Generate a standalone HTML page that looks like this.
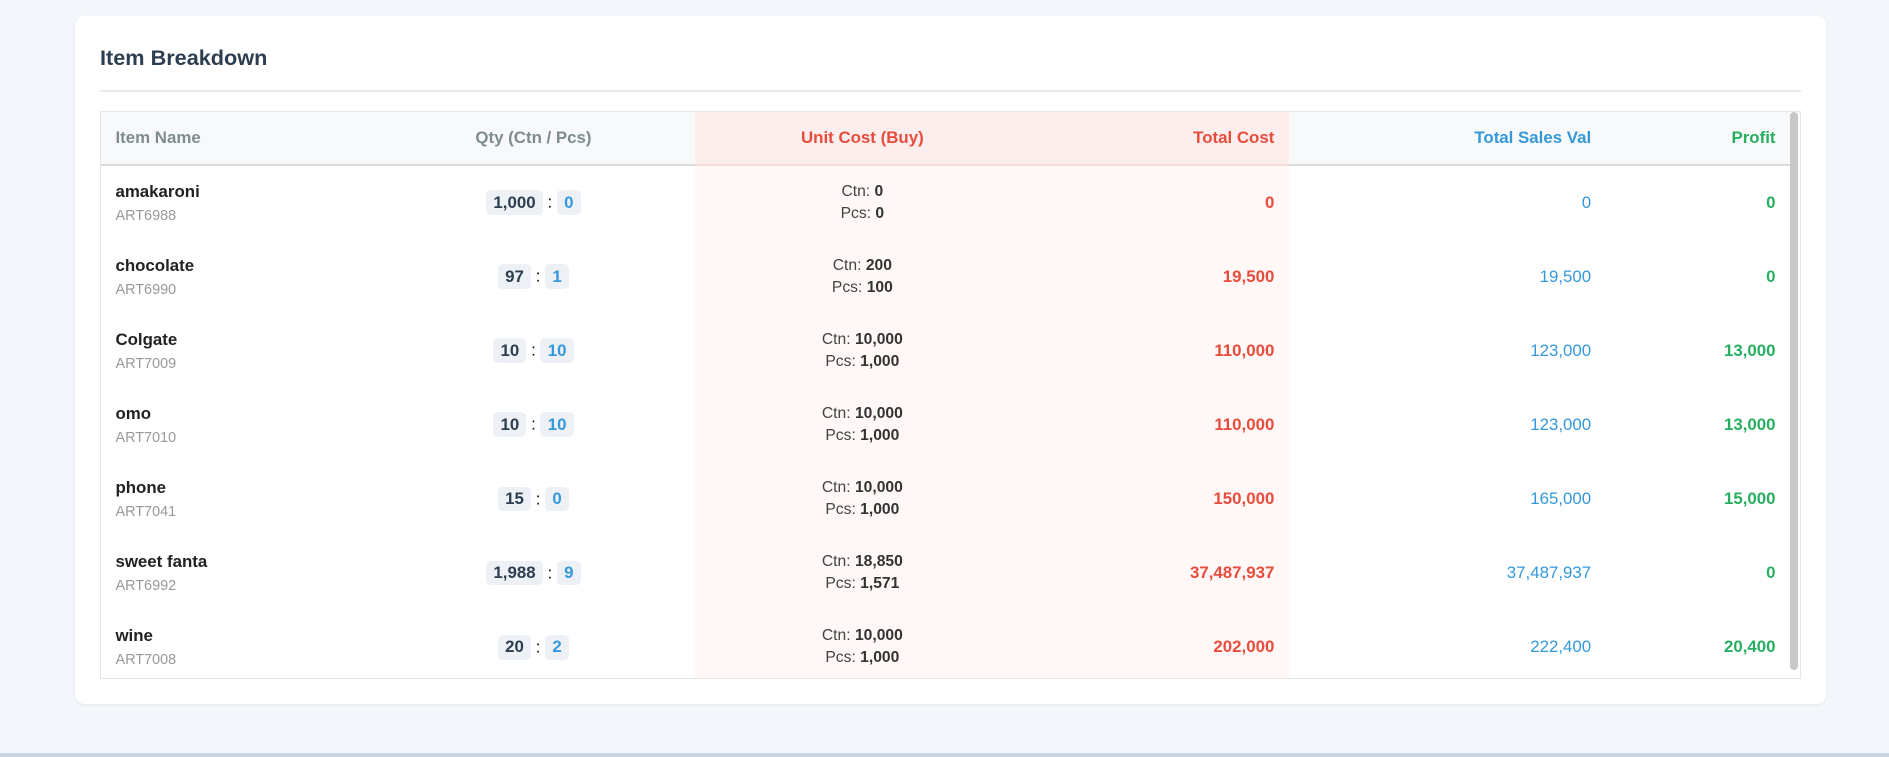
<!DOCTYPE html>
<html><head><meta charset="utf-8"><style>
html,body{margin:0;padding:0;}
body{width:1568px;height:628px;zoom:1.2047;background:#f3f6fa;font-family:"Liberation Sans",sans-serif;position:relative;overflow:hidden;}
.card{position:absolute;left:62px;top:13px;width:1454px;height:571px;background:#fff;border-radius:8px;box-shadow:0 1px 3px rgba(0,0,0,0.05);}
h2{position:absolute;left:21px;top:24px;margin:0;font-size:18px;font-weight:bold;color:#2c3e50;}
.hr{position:absolute;left:21px;top:62px;width:1412px;height:1px;background:#e8ebee;}
.tbl{position:absolute;left:21px;top:79px;width:1410px;height:470px;border:1px solid #e6e6e6;overflow:hidden;}
table{border-collapse:collapse;width:1402px;table-layout:fixed;font-size:14px;}
th{height:43px;background:#f8f9fa;border-bottom:2px solid #dcdcdc;font-weight:bold;color:#7f8c8d;padding:0 12px;}
td{height:61.5px;padding:0 12px;}
.pk{background:#fff8f7;}
th.pk{background:#fdeeee;border-bottom-color:#f7dcdc;}
.nm{font-weight:bold;color:#222;}
.cd{font-size:12px;color:#999;margin-top:5px;}
.b{display:inline-block;background:#edf1f5;border-radius:4px;padding:2px 6px;font-weight:bold;color:#2c3e50;}
.b2{color:#3498db;}
.uc{font-size:13px;color:#444;line-height:18px;text-align:center;}
.uc b{color:#333;}
.red{color:#e74c3c;font-weight:bold;text-align:right;}
.blu{color:#3498db;text-align:right;}
.grn{color:#27ae60;font-weight:bold;text-align:right;}
.sb{position:absolute;right:1px;top:0;width:7px;height:463px;background:#c8c8c8;border-radius:4px;}
.foot{position:absolute;left:0;top:625px;width:1568px;height:3px;background:#c9d2e0;}
</style></head><body>
<div class="card">
<h2>Item Breakdown</h2>
<div class="hr"></div>
<div class="tbl">
<table>
<colgroup><col style="width:225px"><col style="width:268px"><col style="width:278px"><col style="width:215px"><col style="width:263px"><col style="width:153px"></colgroup>
<tr><th style="text-align:left">Item Name</th><th>Qty (Ctn / Pcs)</th><th class="pk" style="color:#e74c3c">Unit Cost (Buy)</th><th class="pk" style="color:#e74c3c;text-align:right">Total Cost</th><th style="color:#3498db;text-align:right">Total Sales Val</th><th style="color:#27ae60;text-align:right">Profit</th></tr>
<tr><td><div class="nm">amakaroni</div><div class="cd">ART6988</div></td><td style="text-align:center"><span class="b">1,000 </span> : <span class="b b2">0</span></td><td class="pk uc">Ctn: <b>0</b><br>Pcs: <b>0</b></td><td class="pk red">0</td><td class="blu">0</td><td class="grn">0</td></tr>
<tr><td><div class="nm">chocolate</div><div class="cd">ART6990</div></td><td style="text-align:center"><span class="b">97 </span> : <span class="b b2">1</span></td><td class="pk uc">Ctn: <b>200</b><br>Pcs: <b>100</b></td><td class="pk red">19,500</td><td class="blu">19,500</td><td class="grn">0</td></tr>
<tr><td><div class="nm">Colgate</div><div class="cd">ART7009</div></td><td style="text-align:center"><span class="b">10 </span> : <span class="b b2">10</span></td><td class="pk uc">Ctn: <b>10,000</b><br>Pcs: <b>1,000</b></td><td class="pk red">110,000</td><td class="blu">123,000</td><td class="grn">13,000</td></tr>
<tr><td><div class="nm">omo</div><div class="cd">ART7010</div></td><td style="text-align:center"><span class="b">10 </span> : <span class="b b2">10</span></td><td class="pk uc">Ctn: <b>10,000</b><br>Pcs: <b>1,000</b></td><td class="pk red">110,000</td><td class="blu">123,000</td><td class="grn">13,000</td></tr>
<tr><td><div class="nm">phone</div><div class="cd">ART7041</div></td><td style="text-align:center"><span class="b">15 </span> : <span class="b b2">0</span></td><td class="pk uc">Ctn: <b>10,000</b><br>Pcs: <b>1,000</b></td><td class="pk red">150,000</td><td class="blu">165,000</td><td class="grn">15,000</td></tr>
<tr><td><div class="nm">sweet fanta</div><div class="cd">ART6992</div></td><td style="text-align:center"><span class="b">1,988 </span> : <span class="b b2">9</span></td><td class="pk uc">Ctn: <b>18,850</b><br>Pcs: <b>1,571</b></td><td class="pk red">37,487,937</td><td class="blu">37,487,937</td><td class="grn">0</td></tr>
<tr><td><div class="nm">wine</div><div class="cd">ART7008</div></td><td style="text-align:center"><span class="b">20 </span> : <span class="b b2">2</span></td><td class="pk uc">Ctn: <b>10,000</b><br>Pcs: <b>1,000</b></td><td class="pk red">202,000</td><td class="blu">222,400</td><td class="grn">20,400</td></tr>
</table>
<div class="sb"></div>
</div>
</div>
<div class="foot"></div>
</body></html>
